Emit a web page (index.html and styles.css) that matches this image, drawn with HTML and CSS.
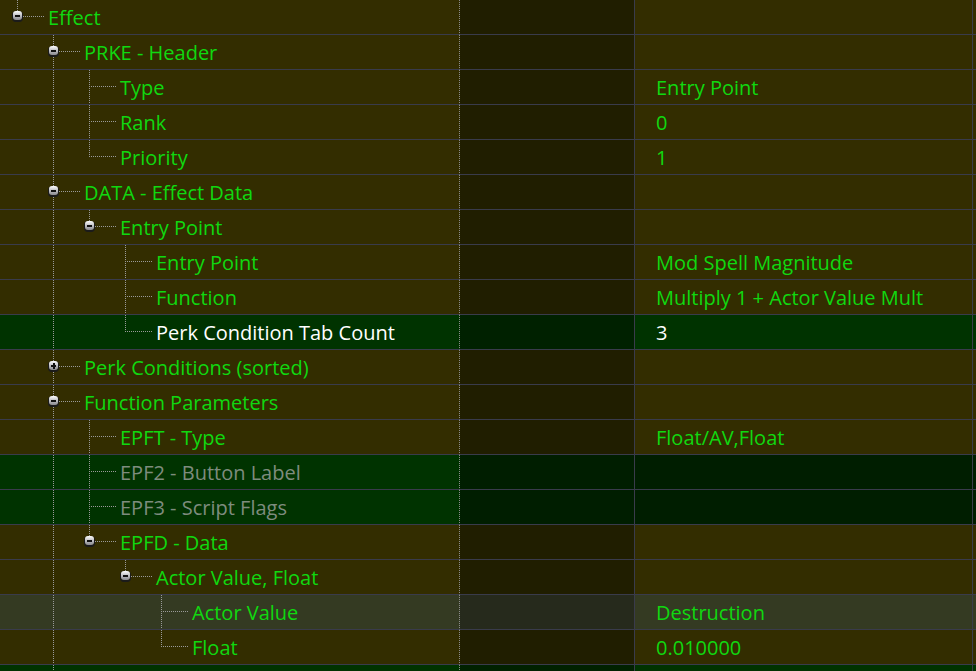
FILE: index.html
```html
<!DOCTYPE html>
<html lang="en">
<head>
  <meta charset="UTF-8">
  <title>Record View - Effect</title>
  <link rel="stylesheet" href="styles.css">
</head>
<body>

  <div class="view">

    <div class="row">
      <div class="tree"><span class="own end"><i class="exp"></i></span><span class="label">Effect</span></div>
      <div class="c2"></div><div class="c3"></div><div class="c4"></div>
    </div>

    <div class="row">
      <div class="tree"><span class="g"></span><span class="own tee"><i class="exp"></i></span><span class="label">PRKE - Header</span></div>
      <div class="c2"></div><div class="c3"></div><div class="c4"></div>
    </div>

    <div class="row">
      <div class="tree"><span class="g"></span><span class="g pipe"></span><span class="own tee"></span><span class="label">Type</span></div>
      <div class="c2"></div><div class="c3">Entry Point</div><div class="c4"></div>
    </div>

    <div class="row">
      <div class="tree"><span class="g"></span><span class="g pipe"></span><span class="own tee"></span><span class="label">Rank</span></div>
      <div class="c2"></div><div class="c3">0</div><div class="c4"></div>
    </div>

    <div class="row">
      <div class="tree"><span class="g"></span><span class="g pipe"></span><span class="own end"></span><span class="label">Priority</span></div>
      <div class="c2"></div><div class="c3">1</div><div class="c4"></div>
    </div>

    <div class="row">
      <div class="tree"><span class="g"></span><span class="own tee"><i class="exp"></i></span><span class="label">DATA - Effect Data</span></div>
      <div class="c2"></div><div class="c3"></div><div class="c4"></div>
    </div>

    <div class="row">
      <div class="tree"><span class="g"></span><span class="g pipe"></span><span class="own end"><i class="exp"></i></span><span class="label">Entry Point</span></div>
      <div class="c2"></div><div class="c3"></div><div class="c4"></div>
    </div>

    <div class="row">
      <div class="tree"><span class="g"></span><span class="g pipe"></span><span class="g"></span><span class="own tee"></span><span class="label">Entry Point</span></div>
      <div class="c2"></div><div class="c3">Mod Spell Magnitude</div><div class="c4"></div>
    </div>

    <div class="row">
      <div class="tree"><span class="g"></span><span class="g pipe"></span><span class="g"></span><span class="own tee"></span><span class="label">Function</span></div>
      <div class="c2"></div><div class="c3">Multiply 1 + Actor Value Mult</div><div class="c4"></div>
    </div>

    <div class="row sel">
      <div class="tree"><span class="g"></span><span class="g pipe"></span><span class="g"></span><span class="own end"></span><span class="label">Perk Condition Tab Count</span></div>
      <div class="c2"></div><div class="c3">3</div><div class="c4"></div>
    </div>

    <div class="row">
      <div class="tree"><span class="g"></span><span class="own tee"><i class="exp plus"></i></span><span class="label">Perk Conditions (sorted)</span></div>
      <div class="c2"></div><div class="c3"></div><div class="c4"></div>
    </div>

    <div class="row">
      <div class="tree"><span class="g"></span><span class="own tee"><i class="exp"></i></span><span class="label">Function Parameters</span></div>
      <div class="c2"></div><div class="c3"></div><div class="c4"></div>
    </div>

    <div class="row">
      <div class="tree"><span class="g"></span><span class="g pipe"></span><span class="own tee"></span><span class="label">EPFT - Type</span></div>
      <div class="c2"></div><div class="c3">Float/AV,Float</div><div class="c4"></div>
    </div>

    <div class="row dim">
      <div class="tree"><span class="g"></span><span class="g pipe"></span><span class="own tee"></span><span class="label">EPF2 - Button Label</span></div>
      <div class="c2"></div><div class="c3"></div><div class="c4"></div>
    </div>

    <div class="row dim">
      <div class="tree"><span class="g"></span><span class="g pipe"></span><span class="own tee"></span><span class="label">EPF3 - Script Flags</span></div>
      <div class="c2"></div><div class="c3"></div><div class="c4"></div>
    </div>

    <div class="row">
      <div class="tree"><span class="g"></span><span class="g pipe"></span><span class="own end"><i class="exp"></i></span><span class="label">EPFD - Data</span></div>
      <div class="c2"></div><div class="c3"></div><div class="c4"></div>
    </div>

    <div class="row">
      <div class="tree"><span class="g"></span><span class="g pipe"></span><span class="g"></span><span class="own end"><i class="exp"></i></span><span class="label">Actor Value, Float</span></div>
      <div class="c2"></div><div class="c3"></div><div class="c4"></div>
    </div>

    <div class="row hot">
      <div class="tree"><span class="g"></span><span class="g pipe"></span><span class="g"></span><span class="g"></span><span class="own tee"></span><span class="label">Actor Value</span></div>
      <div class="c2"></div><div class="c3">Destruction</div><div class="c4"></div>
    </div>

    <div class="row">
      <div class="tree"><span class="g"></span><span class="g pipe"></span><span class="g"></span><span class="g"></span><span class="own end"></span><span class="label">Float</span></div>
      <div class="c2"></div><div class="c3">0.010000</div><div class="c4"></div>
    </div>

    <div class="row sel">
      <div class="tree"><span class="g"></span><span class="own tee"></span></div>
      <div class="c2"></div><div class="c3"></div><div class="c4"></div>
    </div>

  </div>

</body>
</html>
```

FILE: styles.css
```css
body {
  margin: 0;
  background: #332d00;
  font-family: "Open Sans", "Noto Sans", sans-serif;
  font-size: 20px;
  color: #10d810;
  overflow: hidden;
}

.view {
  width: 976px;
  height: 671px;
  overflow: hidden;
}

.row {
  display: grid;
  grid-template-columns: 460px 175px 338px 1fr;
  height: 35px;
}

.row > div {
  border-bottom: 1px solid #393b4b;
  line-height: 36px;
  white-space: nowrap;
  overflow: hidden;
}

.tree {
  display: flex;
  background: #332d00;
  border-right: 1px dotted #8c8c8c;
}

.c2 {
  background: #201e00;
  border-right: 1px solid #3a3b4b;
}

.c3 {
  background: #332d00;
  padding-left: 21px;
  border-right: 1px solid #3a3b4b;
}

.c4 {
  background: #332d00;
}

/* tree guides */
.g {
  flex: 0 0 36px;
}

.g.pipe {
  background: repeating-linear-gradient(to bottom, #9a9a9a 0 1px, transparent 1px 2px) 17px 0 / 1px 100% no-repeat;
}

.own {
  flex: 0 0 44px;
  padding: 11px 0 0 13px;
  box-sizing: border-box;
}

.own.tee {
  background:
    repeating-linear-gradient(to right, #9a9a9a 0 1px, transparent 1px 2px) 17px 16px / 27px 1px no-repeat,
    repeating-linear-gradient(to bottom, #9a9a9a 0 1px, transparent 1px 2px) 17px 0 / 1px 100% no-repeat;
}

.own.end {
  background:
    repeating-linear-gradient(to right, #9a9a9a 0 1px, transparent 1px 2px) 17px 16px / 27px 1px no-repeat,
    repeating-linear-gradient(to bottom, #9a9a9a 0 1px, transparent 1px 2px) 17px 0 / 1px 17px no-repeat;
}

.label {
  padding-left: 4px;
}

/* expand / collapse button */
.exp {
  display: block;
  position: relative;
  width: 9px;
  height: 9px;
  border-radius: 3px;
  background: linear-gradient(#fdfdfd, #b4b4b8 60%, #8a8a90);
  box-shadow: 0 1px 0 1px #1b1b1b;
}

.exp::before {
  content: "";
  position: absolute;
  left: 2px;
  top: 4px;
  width: 5px;
  height: 2px;
  background: #111;
}

.exp.plus::after {
  content: "";
  position: absolute;
  left: 4px;
  top: 2px;
  width: 2px;
  height: 6px;
  background: #111;
}

/* row states */
.sel .tree, .sel .c3, .sel .c4 {
  background: #003300;
}

.sel .c2 {
  background: #002100;
}

.sel .label, .sel .c3 {
  color: #ffffff;
}

.dim .tree {
  background: #003300;
}

.dim .c2, .dim .c3, .dim .c4 {
  background: #001e00;
}

.dim .label {
  color: #7e8c7e;
}

.hot .tree, .hot .c3, .hot .c4 {
  background: #343a22;
}

.hot .c2 {
  background: #262a1c;
}
```
